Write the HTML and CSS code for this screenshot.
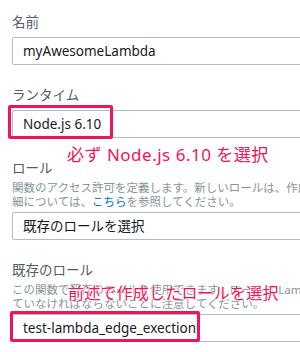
FILE: index.html
```html
<!DOCTYPE html>
<html lang="ja">

<head>
    <meta charset="UTF-8">
    <meta name="viewport" content="width=device-width, initial-scale=1.0">
    <title>Lambda 関数の作成</title>
    <link rel="stylesheet" href="styles.css">
</head>

<body>
    <div class="form">
        <div class="field">
            <div class="label">名前</div>
            <div class="input">myAwesomeLambda</div>
        </div>

        <div class="field">
            <div class="label">ランタイム</div>
            <div class="input-wrap">
                <div class="input">Node.js 6.10</div>
                <span class="mark mark-runtime"></span>
            </div>
            <span class="note note-runtime">必ず Node.js 6.10 を選択</span>
        </div>

        <div class="field">
            <div class="label">ロール</div>
            <div class="desc">関数のアクセス許可を定義します。新しいロールは、作成後に数分かかる場合があります。詳<br>細については、<a href="#">こちら</a>を参照してください。</div>
            <div class="input">既存のロールを選択</div>
        </div>

        <div class="field">
            <div class="label">既存のロール</div>
            <div class="desc">この関数で既存のロールを使用できます。ロールは Lambda が引き受けられるようになっ<br>ていなければならないことに注意してください。</div>
            <div class="input-wrap">
                <div class="input">test-lambda_edge_exection</div>
                <span class="mark mark-role"></span>
            </div>
            <span class="note note-role">前述で作成したロールを選択</span>
        </div>
    </div>
</body>

</html>
```

FILE: styles.css
```css
body,
div {
    margin: 0;
    padding: 0;
}

html,
body {
    width: 300px;
    height: 352px;
    overflow: hidden;
    background: #fff;
}

body {
    font-family: "Noto Sans", "Noto Sans CJK JP", sans-serif;
    color: #16191f;
}

.form {
    width: 420px;
    padding: 12px 0 0 12px;
}

.field {
    position: relative;
    margin-bottom: 20px;
}

.label {
    font-size: 13.5px;
    line-height: 20px;
    color: #545b64;
    margin-bottom: 5px;
}

.desc {
    font-size: 11.5px;
    line-height: 14px;
    color: #879596;
    white-space: nowrap;
    margin-top: -2px;
    margin-bottom: 3px;
}

.desc a {
    color: #0073bb;
    text-decoration: none;
}

.input {
    height: 26px;
    line-height: 26px;
    padding-left: 10px;
    border: 1px solid #b4bcbd;
    border-radius: 2px;
    font-size: 13.5px;
    color: #16191f;
}

.input-wrap {
    position: relative;
}

/* 赤枠 */
.mark {
    position: absolute;
    border: 3px solid #f0145a;
    border-radius: 2px;
}

.mark-runtime {
    left: -4px;
    top: -5px;
    width: 99px;
    height: 28px;
}

.mark-role {
    left: -2px;
    top: -3px;
    width: 184px;
    height: 25px;
}

/* 注釈 */
.note {
    position: absolute;
    white-space: nowrap;
    font-size: 16px;
    line-height: 20px;
    color: #f0145a;
    text-shadow: 0 0 2px #fff, 0 0 2px #fff, 0 0 3px #fff;
}

.note-runtime {
    left: 55px;
    top: 60px;
    font-size: 17px;
    letter-spacing: 0.5px;
}

.note-role {
    left: 56px;
    top: 23px;
    letter-spacing: 0.2px;
}
```
